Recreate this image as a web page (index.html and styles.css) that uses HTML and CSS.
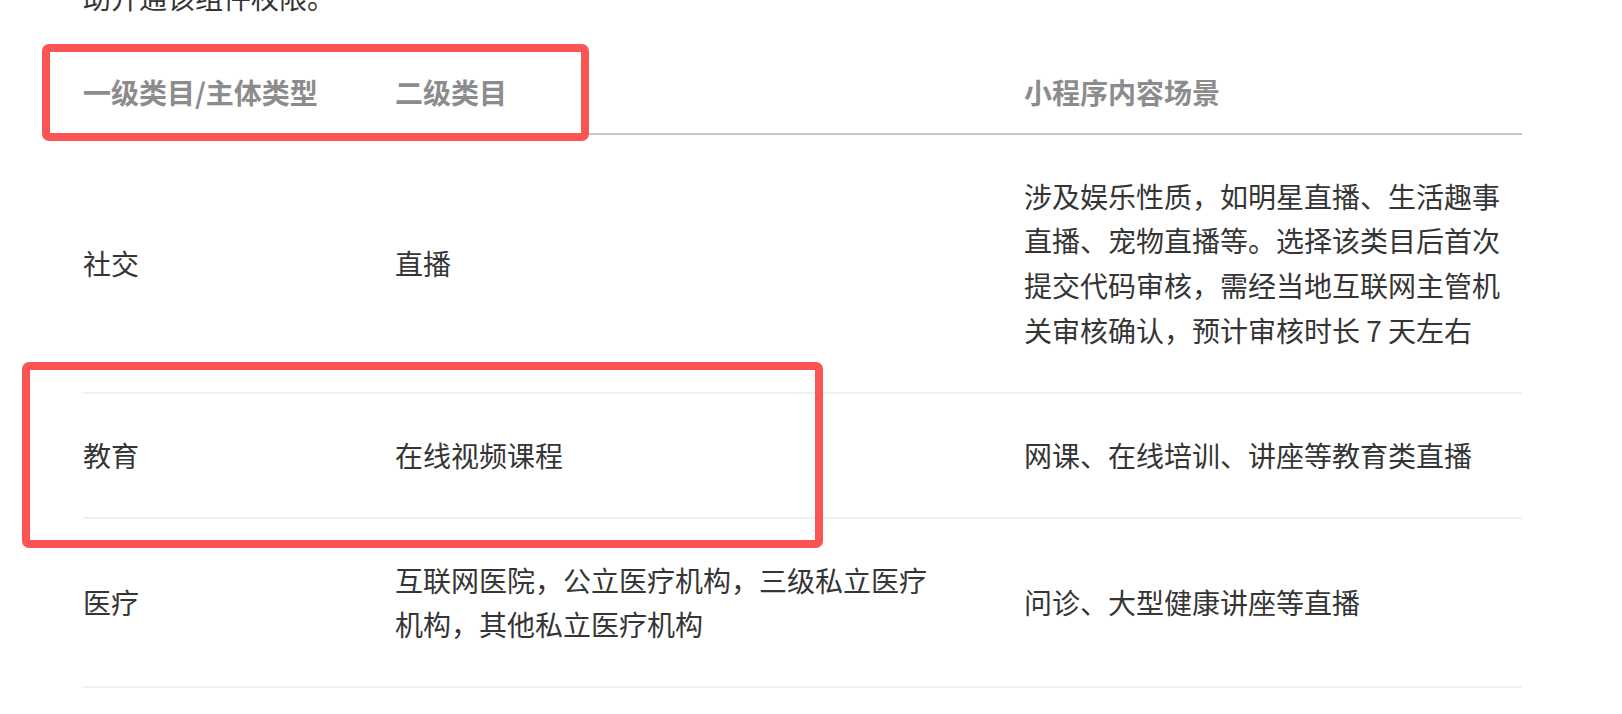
FILE: index.html
```html
<!DOCTYPE html>
<html lang="zh-CN">
<head>
    <meta charset="UTF-8">
    <meta name="viewport" content="width=device-width, initial-scale=1.0">
    <title>直播组件类目</title>
    <link rel="stylesheet" href="styles.css">
</head>
<body>

<div class="page">
    <p class="intro">助开通该组件权限。</p>

    <table class="category-table">
        <colgroup>
            <col class="col-first">
            <col class="col-second">
            <col class="col-scene">
        </colgroup>
        <thead>
            <tr>
                <th>一级类目/主体类型</th>
                <th>二级类目</th>
                <th>小程序内容场景</th>
            </tr>
        </thead>
        <tbody>
            <tr>
                <td>社交</td>
                <td>直播</td>
                <td>涉及娱乐性质，如明星直播、生活趣事直播、宠物直播等。选择该类目后首次提交代码审核，需经当地互联网主管机关审核确认，预计审核时长 7 天左右</td>
            </tr>
            <tr>
                <td>教育</td>
                <td>在线视频课程</td>
                <td>网课、在线培训、讲座等教育类直播</td>
            </tr>
            <tr>
                <td>医疗</td>
                <td>互联网医院，公立医疗机构，三级私立医疗机构，其他私立医疗机构</td>
                <td>问诊、大型健康讲座等直播</td>
            </tr>
        </tbody>
    </table>

    <!-- annotation boxes drawn over the screenshot -->
    <div class="mark mark-head"></div>
    <div class="mark mark-edu"></div>
</div>

</body>
</html>
```

FILE: styles.css
```css
body {
    margin: 0;
    padding: 0;
    background-color: #fff;
    font-family: "Noto Sans CJK SC", "Liberation Sans", sans-serif;
    font-size: 28px;
    line-height: 1.6;
    color: #353535;
}
.page {
    position: relative;
    display: flow-root;
    padding: 0 100px 0 83px;
}
.intro {
    margin: -25px 0 32px;
}
.category-table {
    width: 1439px;
    table-layout: fixed;
    border-collapse: collapse;
}
.col-first {
    width: 312px;
}
.col-second {
    width: 629px;
}
.col-scene {
    width: 498px;
}
th, td {
    text-align: left;
    vertical-align: middle;
}
th {
    padding: 18px 0;
    font-weight: 600;
    color: #8c8c8c;
    border-bottom: 2px solid #c8c8c8;
}
td {
    padding: 39px 0;
    border-bottom: 2px solid #f0f0f0;
}
td:nth-child(2) {
    padding-right: 80px;
}
.mark {
    position: absolute;
    box-sizing: border-box;
    border: 8px solid #fb5454;
    border-radius: 7px;
}
.mark-head {
    left: 42px;
    top: 44px;
    width: 547px;
    height: 97px;
}
.mark-edu {
    left: 22px;
    top: 362px;
    width: 801px;
    height: 186px;
}
```
